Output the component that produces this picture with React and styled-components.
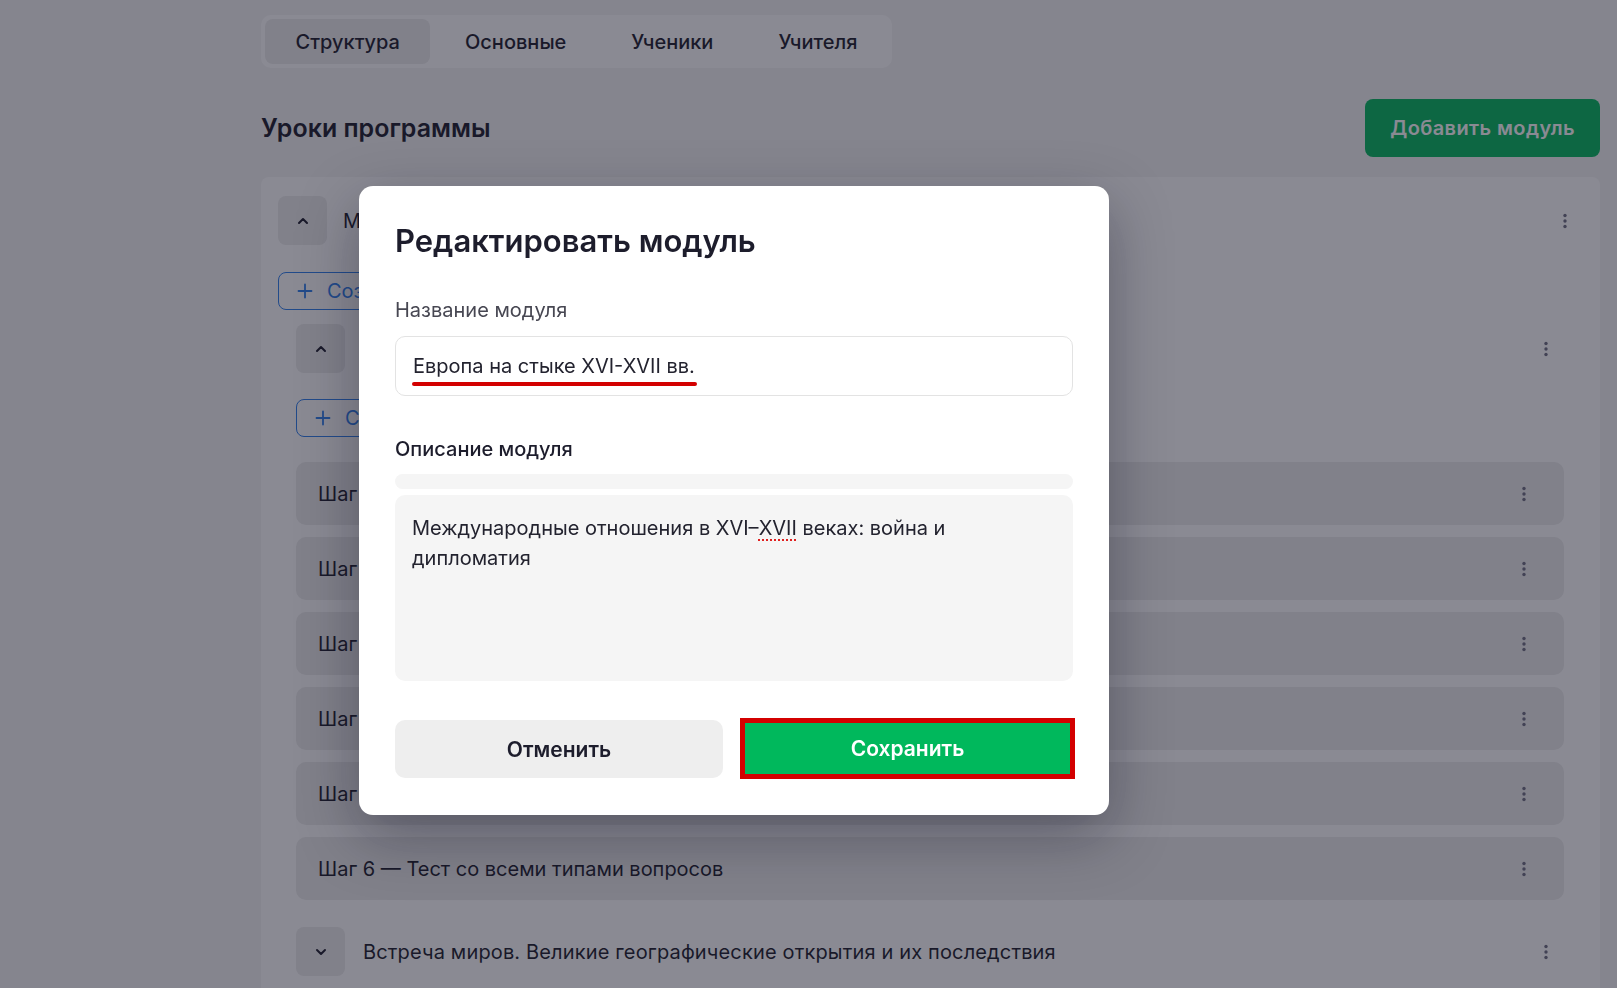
import React from "react";
import styled, { createGlobalStyle } from "styled-components";

const GlobalStyle = createGlobalStyle`
  html, body {
    margin: 0;
    padding: 0;
    background: #f5f5f5;
    font-family: Inter, "Noto Sans", sans-serif;
    color: #1d1d2c;
  }
  * { box-sizing: border-box; }
`;

const ChevronIcon = ({ down }) => (
  <svg width="14" height="14" viewBox="0 0 14 14" fill="none">
    <path
      d={down ? "M3 5l4 4 4-4" : "M3 9l4-4 4 4"}
      stroke="#1d1d2c"
      strokeWidth="2"
      strokeLinecap="round"
      strokeLinejoin="round"
    />
  </svg>
);

const PlusIcon = () => (
  <svg width="16" height="16" viewBox="0 0 16 16" fill="none">
    <path d="M8 1.5v13M1.5 8h13" stroke="currentColor" strokeWidth="1.8" strokeLinecap="round" />
  </svg>
);

const KebabIcon = () => (
  <svg width="4" height="16" viewBox="0 0 4 16" fill="#6f6f82">
    <circle cx="2" cy="2.5" r="1.7" />
    <circle cx="2" cy="8" r="1.7" />
    <circle cx="2" cy="13.5" r="1.7" />
  </svg>
);

const steps = [
  "Шаг 1 — Введение в тему",
  "Шаг 2 — Видеолекция",
  "Шаг 3 — Работа с источниками",
  "Шаг 4 — Карта Европы",
  "Шаг 5 — Практическое задание",
  "Шаг 6 — Тест со всеми типами вопросов",
];

export default function App() {
  return (
    <>
      <GlobalStyle />
      <Page>
        <Tabs>
          <Tab active>Структура</Tab>
          <Tab>Основные</Tab>
          <Tab>Ученики</Tab>
          <Tab>Учителя</Tab>
        </Tabs>

        <Header>
          <PageTitle>Уроки программы</PageTitle>
          <PrimaryButton>Добавить модуль</PrimaryButton>
        </Header>

        <Card>
          <Row>
            <ToggleBox><ChevronIcon /></ToggleBox>
            <RowTitle>Модуль 1. Европа на стыке XVI-XVII вв.</RowTitle>
            <Kebab><KebabIcon /></Kebab>
          </Row>
          <CreateButton top={27}><PlusIcon />Создать урок</CreateButton>

          <Nested>
            <Row>
              <ToggleBox><ChevronIcon /></ToggleBox>
              <RowTitle>Урок 1. Международные отношения</RowTitle>
              <Kebab><KebabIcon /></Kebab>
            </Row>
            <CreateButton top={26}><PlusIcon />Создать шаг</CreateButton>

            <StepList>
              {steps.map((s) => (
                <Step key={s}>
                  <span>{s}</span>
                  <Kebab><KebabIcon /></Kebab>
                </Step>
              ))}
            </StepList>

            <LastRow>
              <ToggleBox><ChevronIcon down /></ToggleBox>
              <RowTitle wide>Встреча миров. Великие географические открытия и их последствия</RowTitle>
              <Kebab><KebabIcon /></Kebab>
            </LastRow>
          </Nested>
        </Card>
      </Page>

      <Overlay>
        <Modal>
          <ModalTitle>Редактировать модуль</ModalTitle>

          <Label>Название модуля</Label>
          <Field>
            <Marked>Европа на стыке XVI-XVII вв.</Marked>
          </Field>

          <Label dark top={41}>Описание модуля</Label>
          <EditorBar />
          <TextArea>
            Международные отношения в XVI–<Spell>XVII</Spell> веках: война и
            <br />
            дипломатия
          </TextArea>

          <Actions>
            <CancelButton>Отменить</CancelButton>
            <SaveButton>Сохранить</SaveButton>
          </Actions>
        </Modal>
      </Overlay>
    </>
  );
}

const Page = styled.div`
  height: 988px;
  overflow: hidden;
  padding: 15px 17px 0 261px;
`;

const Tabs = styled.div`
  display: inline-flex;
  gap: 4px;
  padding: 4px;
  background: #ffffff;
  border-radius: 10px;
`;

const Tab = styled.div`
  height: 45px;
  padding: 0 30.5px;
  display: flex;
  align-items: center;
  font-size: 20px;
  font-weight: 500;
  border-radius: 8px;
  background: ${(p) => (p.active ? "#ececec" : "transparent")};
`;

const Header = styled.div`
  display: flex;
  align-items: center;
  justify-content: space-between;
  margin-top: 31px;
`;

const PageTitle = styled.h2`
  margin: 0;
  font-size: 25px;
  font-weight: 600;
`;

const PrimaryButton = styled.button`
  height: 58px;
  padding: 0 25px;
  border: none;
  border-radius: 8px;
  background: #04b85e;
  color: #ffffff;
  font-family: inherit;
  font-size: 20px;
  font-weight: 600;
  letter-spacing: 0.4px;
`;

const Card = styled.div`
  margin-top: 20px;
  background: #ffffff;
  border-radius: 8px;
  padding: 19px 17px 40px 17px;
`;

const Row = styled.div`
  display: flex;
  align-items: center;
  gap: 16px;
`;

const LastRow = styled(Row)`
  margin-top: 27px;
  gap: 18px;
`;

const ToggleBox = styled.div`
  width: 49px;
  height: 49px;
  flex: none;
  display: flex;
  align-items: center;
  justify-content: center;
  background: #ececec;
  border-radius: 8px;
`;

const RowTitle = styled.div`
  flex: 1;
  font-size: 20px;
  letter-spacing: ${(p) => (p.wide ? "0.15px" : "normal")};
`;

const Kebab = styled.div`
  width: 36px;
  height: 36px;
  flex: none;
  display: flex;
  align-items: center;
  justify-content: center;
`;

const CreateButton = styled.div`
  margin-top: ${(p) => p.top}px;
  height: 38px;
  display: inline-flex;
  align-items: center;
  gap: 14px;
  padding: 0 18px;
  border: 1.5px solid #2f80ed;
  border-radius: 8px;
  color: #2f80ed;
  font-size: 20px;
`;

const Nested = styled.div`
  margin-top: 14px;
  padding: 0 19px 0 18px;
`;

const StepList = styled.div`
  margin-top: 25px;
  display: flex;
  flex-direction: column;
  gap: 12px;
`;

const Step = styled.div`
  height: 63px;
  display: flex;
  align-items: center;
  justify-content: space-between;
  padding: 0 22px;
  background: #ececec;
  border-radius: 10px;
  font-size: 20px;
`;

const Overlay = styled.div`
  position: fixed;
  inset: 0;
  background: rgba(21, 21, 39, 0.5);
  display: flex;
  align-items: center;
  justify-content: center;
  padding: 13px 149px 0 0;
`;

const Modal = styled.div`
  width: 750px;
  padding: 38px 36px 37px;
  background: #ffffff;
  border-radius: 14px;
  box-shadow: 0 20px 60px rgba(10, 10, 30, 0.35);
`;

const ModalTitle = styled.h2`
  margin: 0 0 40px;
  font-size: 31px;
  line-height: 34px;
  font-weight: 600;
  color: #1d1d2c;
`;

const Label = styled.div`
  margin-top: ${(p) => p.top || 0}px;
  font-size: 20px;
  line-height: 25px;
  font-weight: ${(p) => (p.dark ? 500 : 400)};
  color: ${(p) => (p.dark ? "#1d1d2c" : "#474752")};
`;

const Field = styled.div`
  margin-top: 13px;
  height: 60px;
  display: flex;
  align-items: center;
  padding: 0 17px;
  border: 1px solid #e3e3e3;
  border-radius: 10px;
  font-size: 20px;
  color: #23232f;
`;

const Marked = styled.span`
  position: relative;

  &::after {
    content: "";
    position: absolute;
    left: -1px;
    right: -2px;
    bottom: -8px;
    height: 4px;
    border-radius: 2px;
    background: #d30000;
  }
`;

const EditorBar = styled.div`
  margin-top: 12px;
  height: 15px;
  background: #f5f5f5;
  border-radius: 8px;
`;

const TextArea = styled.div`
  margin-top: 6px;
  height: 186px;
  padding: 18px 17px;
  background: #f5f5f5;
  border-radius: 10px;
  font-size: 20px;
  line-height: 30px;
  color: #23232f;
`;

const Spell = styled.span`
  text-decoration: underline dotted #e0201f;
  text-underline-offset: 4px;
`;

const Actions = styled.div`
  margin-top: 39px;
  display: grid;
  grid-template-columns: 328px 1fr;
  gap: 16px;
`;

const BaseButton = styled.button`
  height: 58px;
  border-radius: 10px;
  font-family: inherit;
  font-size: 21px;
  font-weight: 600;
`;

const CancelButton = styled(BaseButton)`
  border: none;
  background: #eeeeee;
  color: #1d1d2c;
`;

const SaveButton = styled(BaseButton)`
  margin: -2px -2px -1px 1px;
  height: 61px;
  border: 5px solid #d30000;
  border-radius: 0;
  background: #00b85c;
  color: #ffffff;
`;
